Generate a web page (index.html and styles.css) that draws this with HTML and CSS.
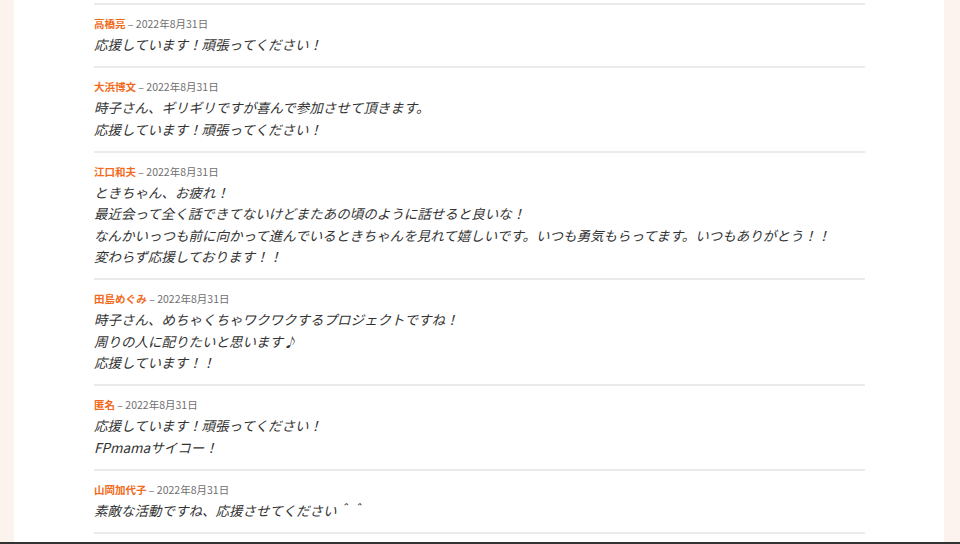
FILE: index.html
```html
<!DOCTYPE html>
<html lang="ja">
<head>
<meta charset="utf-8">
<link rel="stylesheet" href="styles.css">
</head>
<body>
<div class="page">
  <main class="main">
    <ul class="comments">
      <li class="comment">
        <div class="meta"><span class="name">高橋亮</span> <span class="date">– 2022年8月31日</span></div>
        <div class="body"><p>応援しています！頑張ってください！</p></div>
      </li>
      <li class="comment">
        <div class="meta"><span class="name">大浜博文</span> <span class="date">– 2022年8月31日</span></div>
        <div class="body"><p>時子さん、ギリギリですが喜んで参加させて頂きます。<br>応援しています！頑張ってください！</p></div>
      </li>
      <li class="comment">
        <div class="meta"><span class="name">江口和夫</span> <span class="date">– 2022年8月31日</span></div>
        <div class="body"><p>ときちゃん、お疲れ！<br>最近会って全く話できてないけどまたあの頃のように話せると良いな！<br>なんかいっつも前に向かって進んでいるときちゃんを見れて嬉しいです。いつも勇気もらってます。いつもありがとう！！<br>変わらず応援しております！！</p></div>
      </li>
      <li class="comment">
        <div class="meta"><span class="name">田島めぐみ</span> <span class="date">– 2022年8月31日</span></div>
        <div class="body"><p>時子さん、めちゃくちゃワクワクするプロジェクトですね！<br>周りの人に配りたいと思います♪<br>応援しています！！</p></div>
      </li>
      <li class="comment">
        <div class="meta"><span class="name">匿名</span> <span class="date">– 2022年8月31日</span></div>
        <div class="body"><p>応援しています！頑張ってください！<br>FPmamaサイコー！</p></div>
      </li>
      <li class="comment">
        <div class="meta"><span class="name">山岡加代子</span> <span class="date">– 2022年8月31日</span></div>
        <div class="body"><p>素敵な活動ですね、応援させてください＾＾</p></div>
      </li>
    </ul>
  </main>
</div>
<div class="bottom-bar"></div>
</body>
</html>
```
FILE: styles.css
```css
html, body {
  margin: 0;
  padding: 0;
}
body {
  background: #fcf3ee;
  font-family: "Noto Sans CJK JP", "Noto Sans", sans-serif;
  color: #333;
  height: 544px;
  overflow: hidden;
}
.page {
  display: flex;
  height: 542px;
  padding: 0 16px 0 14px;
}
.main {
  flex: 1;
  background: #fff;
  padding: 0 0 0 80px;
}
.comments {
  list-style: none;
  margin: 3px 0 0;
  padding: 0;
  width: 771px;
  border-bottom: 2px solid #ebebeb;
}
.comment {
  border-top: 2px solid #ebebeb;
  padding: 10px 0 10.5px;
}
.meta {
  font-size: 10.5px;
  line-height: 18px;
  color: #6f6f6f;
}
.name {
  color: #f26a1b;
  font-weight: bold;
}
.body {
  margin-top: 1px;
}
.body p {
  margin: 0;
  font-size: 13.5px;
  line-height: 21.5px;
  font-style: italic;
  color: #333;
}
.bottom-bar {
  height: 2px;
  background: #333;
}
```
